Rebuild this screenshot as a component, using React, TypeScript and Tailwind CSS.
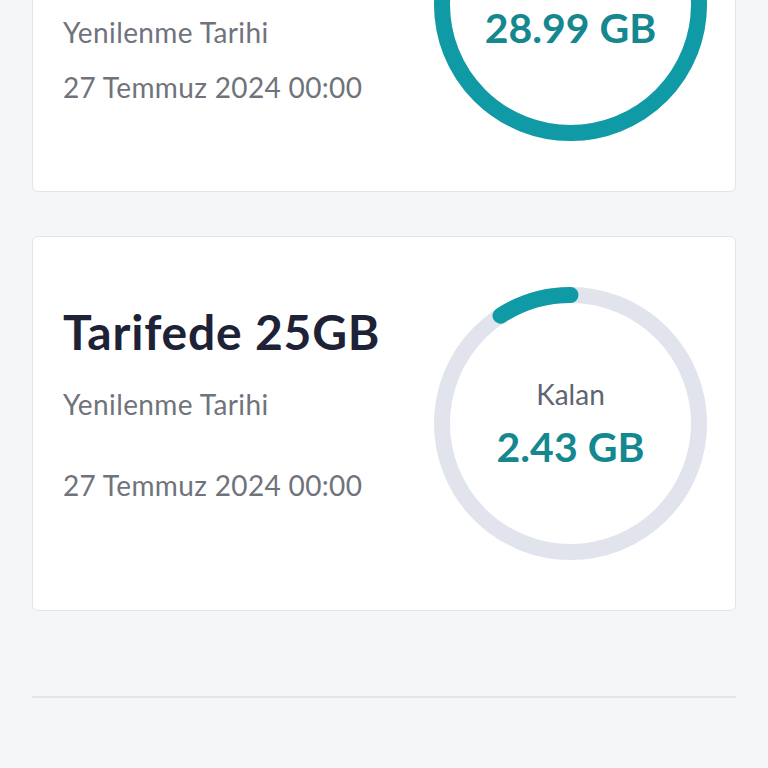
import React from "react";

type UsageCardProps = {
  titleLines: string[];
  remaining: string;
  used: number; // fraction of the ring that is filled
  className?: string;
  titleGap: string;
  dateGap: string;
};

function Ring({ fraction }: { fraction: number }) {
  const r = 128.5;
  const c = 136.5;
  const full = fraction >= 0.999;
  const angle = fraction * Math.PI * 2;
  const x = c - r * Math.sin(angle);
  const y = c - r * Math.cos(angle);
  const large = fraction > 0.5 ? 1 : 0;

  return (
    <svg width="273" height="273" viewBox="0 0 273 273" className="block">
      <circle cx={c} cy={c} r={r} fill="none" stroke="#e1e4ec" strokeWidth="16" />
      {full ? (
        <circle cx={c} cy={c} r={r} fill="none" stroke="#0f9aa5" strokeWidth="16" />
      ) : (
        <path
          d={`M ${c} ${c - r} A ${r} ${r} 0 ${large} 0 ${x} ${y}`}
          fill="none"
          stroke="#0f9aa5"
          strokeWidth="16"
          strokeLinecap="round"
        />
      )}
    </svg>
  );
}

function UsageCard({ titleLines, remaining, used, className = "", titleGap, dateGap }: UsageCardProps) {
  return (
    <div
      className={`flex justify-between rounded-[6px] border border-[#e2e4e9] bg-white pl-[30px] pr-[28px] py-[50px] ${className}`}
    >
      {/* Plan info */}
      <div className="flex flex-col pt-[21px]">
        {titleLines.map((line) => (
          <div
            key={line}
            className="text-[48px] leading-[47px] font-bold tracking-[0.8px] text-[#1d2236] whitespace-nowrap"
          >
            {line}
          </div>
        ))}
        <div className={`${titleGap} text-[28px] leading-[28px] tracking-[0.4px] text-[#6f737b]`}>
          Yenilenme Tarihi
        </div>
        <div className={`${dateGap} text-[28px] leading-[28px] tracking-[0.35px] text-[#6f737b]`}>
          27 Temmuz 2024 00:00
        </div>
      </div>

      {/* Remaining ring */}
      <div className="relative h-[273px] w-[273px] shrink-0">
        <Ring fraction={used} />
        <div className="absolute inset-0 flex flex-col items-center justify-center">
          <div className="text-[28px] leading-[28px] text-[#5e6470]">Kalan</div>
          <div className="mt-[18px] text-[41px] leading-[42px] font-bold text-[#14878f]">{remaining}</div>
        </div>
      </div>
    </div>
  );
}

export default function App() {
  return (
    <div
      className="min-h-screen overflow-hidden bg-[#f5f6f8] px-[32px]"
      style={{ fontFamily: "Lato, 'Noto Sans', sans-serif" }}
    >
      <UsageCard
        className="-mt-[183px]"
        titleLines={["Hediye", "İnternet 30GB"]}
        remaining="28.99 GB"
        used={1}
        titleGap="mt-[35px]"
        dateGap="mt-[27px]"
      />
      <UsageCard
        className="mt-[44px]"
        titleLines={["Tarifede 25GB"]}
        remaining="2.43 GB"
        used={33 / 360}
        titleGap="mt-[35px]"
        dateGap="mt-[53px]"
      />
      <div className="mt-[85px] h-[2px] bg-[#e3e5ee]" />
    </div>
  );
}
